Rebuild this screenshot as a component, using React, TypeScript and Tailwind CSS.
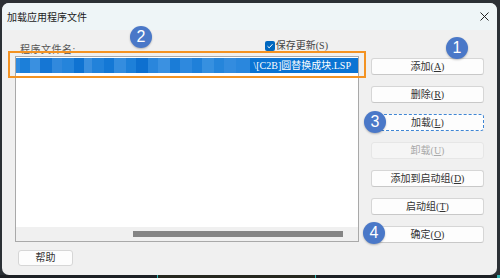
import React from "react";

const mosaic: [number, string][] = [
  [4, "#2f8be0"], [10, "#1c7fd9"], [10, "#3a90e0"], [12, "#1576d4"], [10, "#3189dd"],
  [12, "#2584db"], [10, "#0f73d2"], [8, "#3a8fdf"], [12, "#2282da"], [10, "#1478d5"],
  [12, "#348ddf"], [10, "#1e80d9"], [12, "#0e70d0"], [10, "#2a86dc"], [12, "#3b91e1"],
  [10, "#1a7cd7"], [12, "#2e89de"], [10, "#1f80d9"], [12, "#3690e0"], [10, "#2585db"],
  [12, "#338cdf"], [14, "#2a87dd"],
];

function Btn({
  children,
  disabled,
  focused,
}: {
  children: React.ReactNode;
  disabled?: boolean;
  focused?: boolean;
}) {
  const base =
    "h-[17px] w-full rounded-[3px] flex items-center justify-center text-[10px] leading-none";
  if (disabled)
    return (
      <div className={base + " bg-[#f5f5f5] border border-[#e6e6e6] text-[#a9a9a9]"}>
        {children}
      </div>
    );
  if (focused)
    return (
      <div className={base + " bg-[#fdfdfd] border border-dashed border-[#3f86d4] text-[#333]"}>
        {children}
      </div>
    );
  return (
    <div className={base + " bg-[#fdfdfd] border border-[#d6d6d6] border-b-[#c8c8c8] text-[#333]"}>
      {children}
    </div>
  );
}

function Badge({ n, cls }: { n: string; cls: string }) {
  return (
    <div
      className={
        "absolute w-[22px] h-[22px] rounded-full bg-[#4a78c8] text-white flex items-center justify-center font-['Liberation_Sans',sans-serif] text-[16px] leading-none shadow-[0_1px_2px_rgba(0,0,0,0.25)] " +
        cls
      }
    >
      {n}
    </div>
  );
}

export default function App() {
  return (
    <div className="relative w-[500px] h-[278px] bg-[#2b3035] overflow-hidden font-['Liberation_Serif','Noto_Sans_CJK_SC',serif]">
      <div className="pt-[3px] pl-[2px]">
        <div className="w-[495px] h-[272px] rounded-[7px] bg-[#f0f0f0] overflow-hidden flex flex-col">
          <div className="h-[27px] shrink-0 bg-[#eef5f7] flex items-center justify-between pl-[5px] pr-[8px]">
            <span className="font-['Noto_Sans_CJK_SC',sans-serif] text-[10px] text-[#1b1b1b]">
              加载应用程序文件
            </span>
            <svg width="9" height="9" viewBox="0 0 9 9">
              <path d="M0.5 0.5 L8.5 8.5 M8.5 0.5 L0.5 8.5" stroke="#222" strokeWidth="1" />
            </svg>
          </div>

          <div className="flex pl-[13px]">
            <div className="w-[344px] pt-[12px] flex flex-col">
              <div className="h-[14px] flex items-start pl-[5px] pr-[31px]">
                <span className="text-[10px] leading-[14px] text-[#555] tracking-[0.5px] mt-[1px]">
                  程序文件名:
                </span>
                <div className="ml-auto flex items-center gap-[1px] mt-[-1px]">
                  <div className="w-[10px] h-[10px] rounded-[2px] bg-[#0067c0] flex items-center justify-center">
                    <svg width="8" height="8" viewBox="0 0 8 8">
                      <path d="M1.5 4.2 L3.2 5.8 L6.5 2.2" stroke="#fff" strokeWidth="1" fill="none" />
                    </svg>
                  </div>
                  <span className="text-[10px] leading-none text-[#444]">保存更新(S)</span>
                </div>
              </div>
              <div className="h-[186px] border border-[#a9a9a9] bg-white flex flex-col">
                <div className="mt-[1px] h-[15px] flex bg-[#0b74d3]">
                  <div className="flex-1 flex overflow-hidden">
                    {mosaic.map(([w, c], i) => (
                      <div key={i} style={{ width: w, background: c }} className="h-full shrink-0" />
                    ))}
                  </div>
                  <span className="text-[10px] leading-[15px] text-white pr-[7px] whitespace-nowrap">
                    \[C2B]圆替换成块.LSP
                  </span>
                </div>
                <div className="flex-1" />
                <div className="h-[14px] bg-[#f0f0f0] pl-[117px] pt-[4px]">
                  <div className="w-[210px] h-[6px] bg-[#858585]" />
                </div>
              </div>
            </div>

            <div className="ml-[12px] w-[113px] pt-[28px] flex flex-col gap-[11px]">
              <Btn>
                添加(<span className="underline">A</span>)
              </Btn>
              <Btn>
                删除(<span className="underline">R</span>)
              </Btn>
              <Btn focused>
                加载(<span className="underline">L</span>)
              </Btn>
              <Btn disabled>
                卸载(<span className="underline">U</span>)
              </Btn>
              <Btn>
                添加到启动组(<span className="underline">D</span>)
              </Btn>
              <Btn>
                启动组(<span className="underline">T</span>)
              </Btn>
              <Btn>
                确定(<span className="underline">O</span>)
              </Btn>
            </div>
          </div>

          <div className="mt-[7px] ml-[16px] w-[55px] h-[16px] rounded-[3px] bg-[#fdfdfd] border border-[#d6d6d6] flex items-center justify-center text-[10px] text-[#333] leading-none">
            帮助
          </div>
        </div>
      </div>
      <div className="h-[3px] flex bg-[#1d2024]">
        <div className="w-[157px]" />
        <div className="w-[1px] bg-[#2fb3b0]" />
        <div className="w-[157px] bg-[#26281f]" />
        <div className="w-[1px] bg-[#2fb3b0]" />
        <div className="flex-1" />
        <div className="w-[3px] bg-[#2fb3b0]" />
      </div>

      <div className="absolute left-[8px] top-[51px] w-[358px] h-[27px] border-2 border-[#f39323]" />
      <Badge n="2" cls="left-[130px] top-[26px]" />
      <Badge n="1" cls="left-[446px] top-[37px]" />
      <Badge n="3" cls="left-[364px] top-[111px]" />
      <Badge n="4" cls="left-[363px] top-[222px]" />
    </div>
  );
}
